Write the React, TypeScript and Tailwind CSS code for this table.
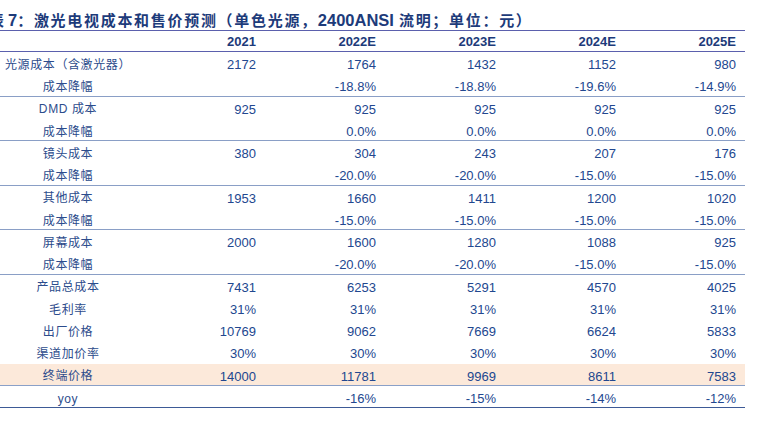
const ROWS: { label: string; vals: string[]; sep?: string; hl?: boolean }[] = [
  { label: "光源成本（含激光器）", vals: ["2172", "1764", "1432", "1152", "980"] },
  { label: "成本降幅", vals: ["", "-18.8%", "-18.8%", "-19.6%", "-14.9%"], sep: "group" },
  { label: "DMD 成本", vals: ["925", "925", "925", "925", "925"] },
  { label: "成本降幅", vals: ["", "0.0%", "0.0%", "0.0%", "0.0%"], sep: "group" },
  { label: "镜头成本", vals: ["380", "304", "243", "207", "176"] },
  { label: "成本降幅", vals: ["", "-20.0%", "-20.0%", "-15.0%", "-15.0%"], sep: "group" },
  { label: "其他成本", vals: ["1953", "1660", "1411", "1200", "1020"] },
  { label: "成本降幅", vals: ["", "-15.0%", "-15.0%", "-15.0%", "-15.0%"], sep: "group" },
  { label: "屏幕成本", vals: ["2000", "1600", "1280", "1088", "925"] },
  { label: "成本降幅", vals: ["", "-20.0%", "-20.0%", "-15.0%", "-15.0%"], sep: "group" },
  { label: "产品总成本", vals: ["7431", "6253", "5291", "4570", "4025"] },
  { label: "毛利率", vals: ["31%", "31%", "31%", "31%", "31%"] },
  { label: "出厂价格", vals: ["10769", "9062", "7669", "6624", "5833"] },
  { label: "渠道加价率", vals: ["30%", "30%", "30%", "30%", "30%"] },
  { label: "终端价格", vals: ["14000", "11781", "9969", "8611", "7583"], sep: "hl", hl: true },
  { label: "yoy", vals: ["", "-16%", "-15%", "-14%", "-12%"], sep: "bottom" },
];

const YEARS = ["2021", "2022E", "2023E", "2024E", "2025E"];

const GRID = "grid grid-cols-[136px_129px_120px_120px_120px_120px]";

export default function App() {
  return (
    <div className="w-[769px] h-[437px] overflow-hidden bg-white">
      <div className="h-[30px] -ml-[11px] pt-[12px] flex items-baseline whitespace-nowrap font-bold text-[#1d3b7a] leading-none">
        <span className="text-[15px] font-['Noto_Sans_CJK_SC',sans-serif]">表</span>
        <span className="text-[16.5px] font-['Liberation_Sans',sans-serif] ml-[4px]">7</span>
        <span className="text-[15px] font-['Noto_Sans_CJK_SC',sans-serif] tracking-[1.7px]">：激光电视成本和售价预测（单色光源，</span>
        <span className="text-[16.5px] font-['Liberation_Sans',sans-serif]">2400ANSI</span>
        <span className="text-[15px] font-['Noto_Sans_CJK_SC',sans-serif] ml-[5px] tracking-[1.7px]">流明；单位：元）</span>
      </div>

      <div className="w-[745px]">
        <div className={`${GRID} h-[22px] border-y border-[#5b60ad] items-center font-bold text-[13px] text-[#1d3b7a] font-['Liberation_Sans',sans-serif]`}>
          <div />
          {YEARS.map((y) => (
            <div key={y} className="text-right pr-[9px] pt-[1px]">{y}</div>
          ))}
        </div>

        {ROWS.map((r, i) => {
          let border = "";
          if (r.sep === "group") border = "border-b-[1.5px] border-[#8a9fc6]";
          if (r.sep === "hl") border = "border-b-[1.5px] border-[#8aa0c8]";
          if (r.sep === "bottom") border = "border-b-[1.5px] border-[#3d5a96]";
          return (
            <div
              key={i}
              className={`${GRID} h-[22.25px] items-center ${border} ${r.hl ? "bg-[#fce9da]" : ""}`}
            >
              <div className="text-center pt-[3px] text-[12px] tracking-[0.6px] text-[#2c4c8c] font-['Liberation_Sans','Noto_Sans_CJK_SC',sans-serif]">
                {r.label}
              </div>
              {r.vals.map((v, j) => (
                <div
                  key={j}
                  className="text-right pr-[9px] pt-[3px] text-[13px] text-[#22478f] font-['Liberation_Sans',sans-serif]"
                >
                  {v}
                </div>
              ))}
            </div>
          );
        })}
      </div>
    </div>
  );
}
